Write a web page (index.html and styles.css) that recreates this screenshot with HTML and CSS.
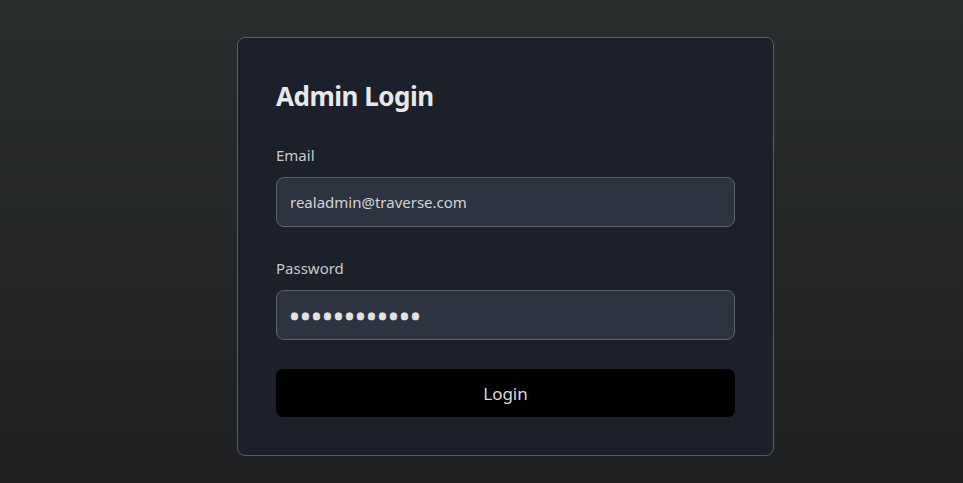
FILE: index.html
```html
<!DOCTYPE html>
<html lang="en">
<head>
    <meta charset="UTF-8">
    <meta name="viewport" content="width=device-width, initial-scale=1.0">
    <title>Admin Login</title>
    <link rel="stylesheet" href="styles.css">
</head>
<body>
    <div class="page">
        <form class="login-card" id="loginForm">
            <h1>Admin Login</h1>

            <div class="field">
                <label for="email">Email</label>
                <input type="email" id="email" name="email" value="realadmin@traverse.com">
            </div>

            <div class="field last">
                <label for="password">Password</label>
                <input type="password" id="password" name="password" value="supersecret1">
            </div>

            <button type="button" class="login-btn">Login</button>
        </form>
    </div>
</body>
</html>
```

FILE: styles.css
```css
html, body {
    margin: 0;
    height: 100%;
}
body {
    font-family: "Noto Sans", "Open Sans", sans-serif;
    background: linear-gradient(to bottom, #2b2e2f 0%, #1f2021 100%);
    color: #e6e6e6;
}
.page {
    padding: 37px 0 0 237px;
}
.login-card {
    box-sizing: border-box;
    width: 537px;
    padding: 38px;
    background-color: #1b202a;
    border: 1px solid #5b5d60;
    border-radius: 8px;
}
h1 {
    margin: 2px 0 30px 0;
    font-size: 26px;
    line-height: 36px;
    font-weight: bold;
    color: #e8e8e8;
    letter-spacing: -0.5px;
}
.field {
    margin-bottom: 30px;
}
.field.last {
    margin-bottom: 29px;
}
label {
    display: block;
    font-size: 15px;
    line-height: 22px;
    color: #c9cacc;
    margin-bottom: 11px;
}
input {
    box-sizing: border-box;
    width: 100%;
    height: 50px;
    padding: 0 13px;
    font-family: inherit;
    font-size: 15px;
    color: #d2d3d5;
    background-color: #2d3340;
    border: 1px solid #5e6168;
    border-radius: 8px;
    outline: none;
}
input[type="password"] {
    font-size: 29px;
    letter-spacing: 0.1px;
    padding-left: 12px;
    color: #e2e2e2;
    -webkit-text-stroke: 0.7px #e2e2e2;
}
.login-btn {
    display: block;
    width: 100%;
    height: 48px;
    border: none;
    border-radius: 7px;
    background-color: #000;
    color: #dcdcdc;
    font-family: inherit;
    font-size: 17px;
    cursor: pointer;
}
```
